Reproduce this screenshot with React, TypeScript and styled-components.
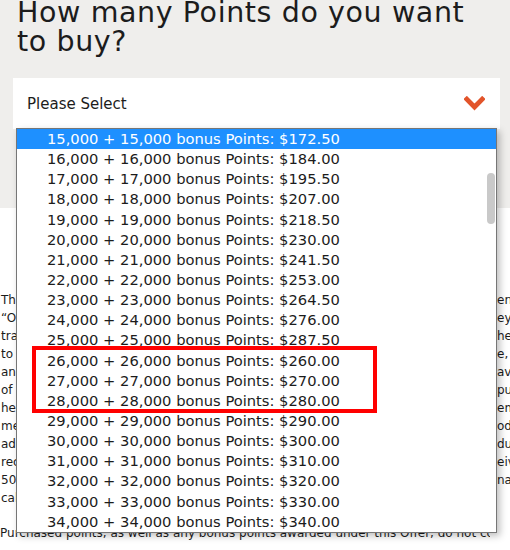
import React from "react";
import styled, { createGlobalStyle } from "styled-components";

const GlobalStyle = createGlobalStyle`
  html, body {
    margin: 0;
    padding: 0;
    background: #ffffff;
    overflow: hidden;
  }
  body {
    font-family: "DejaVu Sans", "Liberation Sans", sans-serif;
    color: #1c1c1c;
  }
`;

const Page = styled.div`
  position: relative;
  width: 510px;
  height: 550px;
  overflow: hidden;
`;

const Hero = styled.section`
  background: #efeeec;
  height: 208px;
  padding: 0 10px 0 13px;
  box-sizing: border-box;
`;

const Heading = styled.h1`
  margin: 0;
  padding: 0 0 0 4px;
  position: relative;
  top: -1px;
  font-size: 28.5px;
  line-height: 28.5px;
  font-weight: 400;
  letter-spacing: 0.6px;
  color: #1c1c1c;
`;

const SelectBox = styled.div`
  margin-top: 21px;
  height: 51px;
  background: #ffffff;
  display: flex;
  align-items: center;
  justify-content: space-between;
  padding: 0 15px 0 14px;
  box-sizing: border-box;
  font-size: 15px;
  color: #1c1c1c;
`;

const Chevron = () => (
  <svg width="21" height="15" viewBox="0 0 21 15">
    <polyline points="2.8,3.2 10.5,11 18.2,3.2" fill="none" stroke="#e2542a" strokeWidth="4.8" strokeLinecap="square" />
  </svg>
);

const Terms = styled.section`
  padding-top: 83px;
  font-size: 12px;
  line-height: 18px;
  color: #1c1c1c;
`;

const Para = styled.div`
  margin-bottom: 17px;
`;

const Line = styled.div`
  display: flex;
  white-space: nowrap;
  height: 18px;
`;

const Lead = styled.span<{ $indent?: number }>`
  flex: 0 0 490px;
  overflow: hidden;
  padding-left: ${(p) => p.$indent ?? 1}px;
  box-sizing: border-box;
`;

const Tail = styled.span`
  padding-left: 7px;
`;

const Dropdown = styled.div`
  position: absolute;
  left: 16px;
  top: 128px;
  width: 481px;
  height: 405px;
  background: #ffffff;
  border: 1px solid #767676;
  box-sizing: border-box;
  box-shadow: 3px 3px 7px rgba(0, 0, 0, 0.25);
  overflow: hidden;
`;

const Option = styled.div<{ $active?: boolean }>`
  height: 20.15px;
  line-height: 20px;
  padding-left: 30px;
  font-size: 14.7px;
  white-space: nowrap;
  background: ${(p) => (p.$active ? "#1e90ff" : "transparent")};
  color: ${(p) => (p.$active ? "#ffffff" : "#1c1c1c")};
`;

const ScrollThumb = styled.div`
  position: absolute;
  right: 1px;
  top: 44px;
  width: 8px;
  height: 51px;
  border-radius: 4px;
  background: #c9c9c9;
`;

const Highlight = styled.div`
  position: absolute;
  left: 32px;
  top: 346px;
  width: 345px;
  height: 67px;
  border: 4.5px solid #ff0000;
  box-sizing: border-box;
  pointer-events: none;
`;

const options = [
  ["15,000", "172.50"],
  ["16,000", "184.00"],
  ["17,000", "195.50"],
  ["18,000", "207.00"],
  ["19,000", "218.50"],
  ["20,000", "230.00"],
  ["21,000", "241.50"],
  ["22,000", "253.00"],
  ["23,000", "264.50"],
  ["24,000", "276.00"],
  ["25,000", "287.50"],
  ["26,000", "260.00"],
  ["27,000", "270.00"],
  ["28,000", "280.00"],
  ["29,000", "290.00"],
  ["30,000", "300.00"],
  ["31,000", "310.00"],
  ["32,000", "320.00"],
  ["33,000", "330.00"],
  ["34,000", "340.00"],
];

const termLines: [string, string][] = [
  ["This Offer is valid for purchases made during the promotion period", "ent"],
  ["\u201cOffer Period\u201d. Members must be logged in to their account when they", "ey"],
  ["transaction is completed. Points purchased are subject to the", "he"],
  ["to a maximum purchase limit per calendar year. Points purchase, s", "e, s"],
  ["annot be cancelled or refunded, and points are not available", " av"],
  ["of unused points after purchase. Points may be used to pu", "pu"],
  ["he Program's terms and conditions. Members must be Program mem", "em"],
  ["member account for at least 30 days. Points are credited in good", "od"],
  ["adopted to an account within 72 hours of purchase and may be du", "du"],
  ["receipt of payment. The number of bonus points a member will receiv", "eiv"],
  ["50,000 points may be purchased or transferred per year. Alternat", "nat"],
  ["calendar year. Offer is void where prohibited by law.", ""],
];

export default function App() {
  return (
    <Page>
      <GlobalStyle />
      <Hero>
        <Heading>
          How many Points do you want
          <br />
          to buy?
        </Heading>
        <SelectBox>
          <span>Please Select</span>
          <Chevron />
        </SelectBox>
      </Hero>
      <Terms>
        <Para>
          {termLines.map(([lead, tail], i) => (
            <Line key={i}>
              <Lead>{lead}</Lead>
              <Tail>{tail}</Tail>
            </Line>
          ))}
        </Para>
        <Line>
          <Lead $indent={-2}>
            Purchased points, as well as any bonus points awarded under this Offer, do not count towards
          </Lead>
        </Line>
      </Terms>
      <Dropdown>
        {options.map(([pts, price], i) => (
          <Option key={pts} $active={i === 0}>
            {pts} + {pts} bonus Points: ${price}
          </Option>
        ))}
        <ScrollThumb />
      </Dropdown>
      <Highlight />
    </Page>
  );
}
